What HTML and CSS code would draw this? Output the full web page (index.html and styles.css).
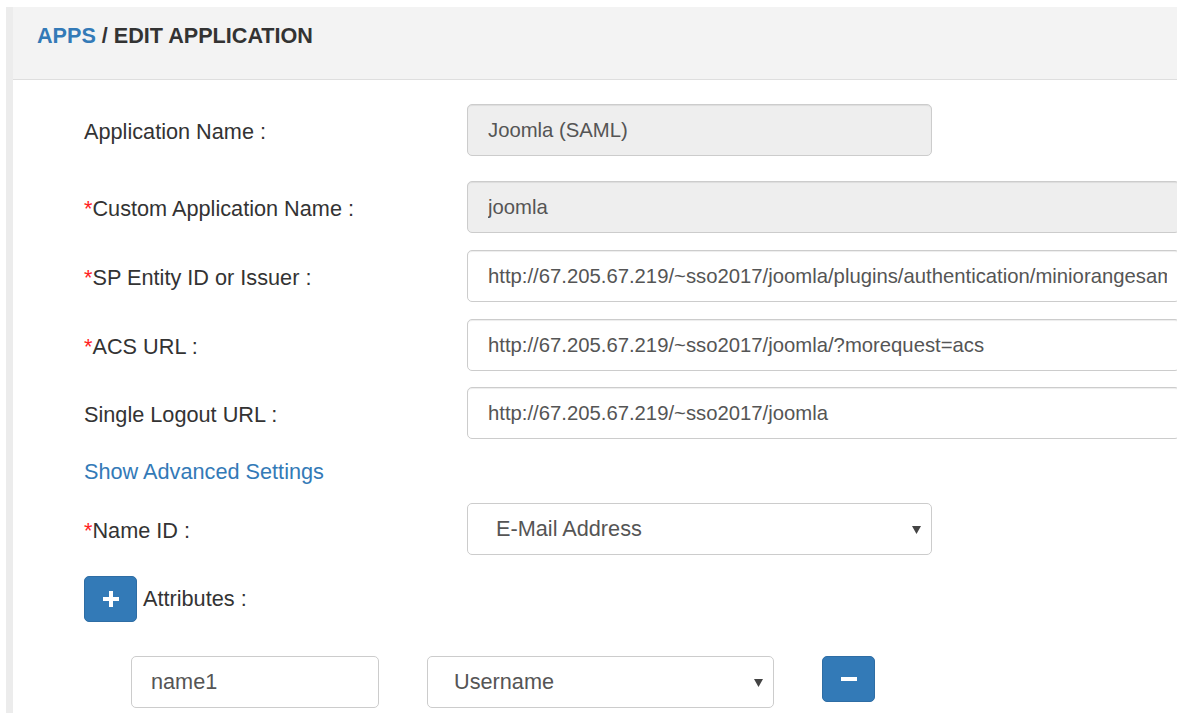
FILE: index.html
```html
<!DOCTYPE html>
<html lang="en">
<head>
<meta charset="utf-8">
<title>Edit Application</title>
<link rel="stylesheet" href="styles.css">
</head>
<body>
<div class="panel">
  <div class="panel-heading"><a class="crumb" href="#">APPS</a> / EDIT APPLICATION</div>
  <div class="panel-body">
    <div class="row first">
      <label class="label">Application Name :</label>
      <div class="control short disabled"><span class="value">Joomla (SAML)</span></div>
    </div>
    <div class="row">
      <label class="label"><span class="req">*</span>Custom Application Name :</label>
      <div class="control wide disabled"><span class="value">joomla</span></div>
    </div>
    <div class="row">
      <label class="label"><span class="req">*</span>SP Entity ID or Issuer :</label>
      <div class="control wide"><span class="value">http://67.205.67.219/~sso2017/joomla/plugins/authentication/miniorangesaml</span></div>
    </div>
    <div class="row tight">
      <label class="label"><span class="req">*</span>ACS URL :</label>
      <div class="control wide"><span class="value">http://67.205.67.219/~sso2017/joomla/?morequest=acs</span></div>
    </div>
    <div class="row">
      <label class="label">Single Logout URL :</label>
      <div class="control wide"><span class="value">http://67.205.67.219/~sso2017/joomla</span></div>
    </div>
    <a class="advanced" href="#">Show Advanced Settings</a>
    <div class="row">
      <label class="label"><span class="req">*</span>Name ID :</label>
      <div class="select short name-id">
        <span>E-Mail Address</span>
        <svg class="caret" width="9" height="8" viewBox="0 0 9 8"><path d="M0 0H9L4.5 8Z" fill="#444"/></svg>
      </div>
    </div>
    <div class="attr-head">
      <button class="btn" type="button">
        <svg width="16" height="16" viewBox="0 0 16 16"><path d="M6 0h4v6h6v4h-6v6h-4v-6h-6v-4h6z" fill="#fff"/></svg>
      </button>
      <span class="attr-label">Attributes :</span>
    </div>
    <div class="attr-row">
      <div class="control attr-name"><span class="value">name1</span></div>
      <div class="select attr-value">
        <span>Username</span>
        <svg class="caret" width="9" height="8" viewBox="0 0 9 8"><path d="M0 0H9L4.5 8Z" fill="#444"/></svg>
      </div>
      <button class="btn" type="button">
        <svg width="16" height="4" viewBox="0 0 16 4"><rect width="16" height="4" fill="#fff"/></svg>
      </button>
    </div>
  </div>
</div>
</body>
</html>
```
FILE: styles.css
```css
html, body {
  margin: 0;
  padding: 0;
  overflow: hidden;
  background: #fff;
}

body {
  font-family: "Liberation Sans", Arial, sans-serif;
  color: #333;
  padding: 7px 0 0 6px;
  height: 713px;
  box-sizing: border-box;
}

.panel {
  border-left: 7px solid #ececec;
  width: 1400px;
  min-height: 720px;
}

.panel-heading {
  background: #f3f3f3;
  height: 73px;
  border-bottom: 1px solid #dedede;
  box-sizing: border-box;
  padding: 16px 0 0 24px;
  line-height: 26px;
  font-size: 21.6px;
  font-weight: bold;
  color: #333;
  white-space: nowrap;
}

.crumb {
  color: #337ab7;
  text-decoration: none;
}

.panel-body {
  padding: 24px 0 0 71px;
}

.row {
  display: flex;
  align-items: center;
  margin-bottom: 17px;
}

.row.first {
  margin-bottom: 25px;
}

.row.tight {
  margin-bottom: 16px;
}

.label {
  width: 383px;
  flex: none;
  font-size: 21.7px;
  color: #333;
  padding-top: 3px;
}

.req {
  color: #f22;
}

.control {
  height: 52px;
  box-sizing: border-box;
  border: 1px solid #ccc;
  border-radius: 5px;
  background: #fff;
  box-shadow: inset 0 1px 1px rgba(0, 0, 0, 0.075);
  display: flex;
  align-items: center;
  padding: 0 12px 0 20px;
  font-size: 20.3px;
  color: #555;
  white-space: nowrap;
}

.control .value {
  flex: 1;
  min-width: 0;
  overflow: hidden;
}

.control.disabled {
  background: #eee;
}

.short {
  width: 465px;
}

.wide {
  width: 713px;
}

.advanced {
  display: block;
  width: max-content;
  font-size: 21.7px;
  line-height: 24px;
  color: #337ab7;
  text-decoration: none;
  margin: 21px 0 19px 0;
}

.select {
  height: 52px;
  box-sizing: border-box;
  border: 1px solid #ccc;
  border-radius: 5px;
  background: #fff;
  display: flex;
  align-items: center;
  justify-content: space-between;
  font-size: 21.7px;
  color: #555;
  white-space: nowrap;
}

.name-id {
  padding: 0 10px 0 28px;
}

.caret {
  display: block;
  margin-top: 1px;
}

.attr-head {
  display: flex;
  align-items: center;
  margin-top: 21px;
}

.btn {
  width: 53px;
  height: 46px;
  border: 1px solid #2e6da4;
  border-radius: 5px;
  background: #337ab7;
  display: flex;
  align-items: center;
  justify-content: center;
  padding: 0;
  flex: none;
}

.attr-label {
  font-size: 21.7px;
  margin-left: 6px;
}

.attr-row {
  display: flex;
  align-items: flex-start;
  gap: 48px;
  margin: 34px 0 0 47px;
}

.attr-name {
  width: 248px;
  font-size: 21.7px;
  padding-left: 19px;
  box-shadow: none;
}

.attr-value {
  width: 347px;
  padding: 0 10px 0 26px;
}
```
